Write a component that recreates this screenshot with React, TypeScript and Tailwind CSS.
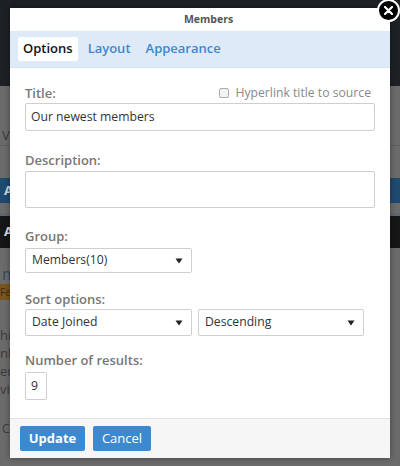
function Caret() {
  return (
    <svg width="8" height="6" viewBox="0 0 8 6" className="shrink-0">
      <path d="M0.5 0.5 L7.5 0.5 L4 5.5 Z" fill="#222" />
    </svg>
  );
}

function Select({ value, className }: { value: string; className: string }) {
  return (
    <div
      className={`flex items-center justify-between rounded-[2px] border border-[#cfcfcf] bg-white pl-[6px] pr-[8px] text-[12.2px] text-[#333] ${className}`}
    >
      <span>{value}</span>
      <Caret />
    </div>
  );
}

function Label({ text, className }: { text: string; className: string }) {
  return (
    <div className={`text-[13px] font-semibold leading-[16px] text-[#777] ${className}`}>{text}</div>
  );
}

function Backdrop() {
  return (
    <div className="flex h-[466px] w-[400px] flex-col bg-[#6b6b6b] text-[13px] text-[#3a3a3a]">
      <div className="h-[86px] bg-[#1d2125]" />
      <div className="flex h-[60px] items-center border-b border-[#5f5f5f] pl-[2px] pt-[40px]">Vi</div>
      <div className="h-[32px]" />
      <div className="flex h-[25px] items-center bg-[#1f4a70] pl-[4px] font-bold text-[#cfd6de]">A</div>
      <div className="h-[13px] border-b-[3px] border-[#5c6670]" />
      <div className="flex h-[32px] items-center bg-[#161616] pl-[4px] font-bold text-[#ddd]">A</div>
      <div className="h-[16px]" />
      <div className="h-[20px] pl-[2px] text-[16px] leading-[20px] text-[#2d4a66]">m</div>
      <div className="h-[16px] w-[20px] bg-[#7a5520] text-[10px] leading-[16px] text-[#3a2a10]">Fe</div>
      <div className="h-[26px]" />
      <div className="flex flex-col leading-[18px]">
        <span>hi</span>
        <span>nl</span>
        <span>er</span>
        <span>vis</span>
      </div>
      <div className="h-[22px]" />
      <div className="pl-[2px] text-[12px]">Co</div>
    </div>
  );
}

export default function App() {
  const font = { fontFamily: '"Open Sans", "Noto Sans", sans-serif' };
  return (
    <div className="relative h-[466px] w-[400px] overflow-hidden" style={font}>
      <Backdrop />

      {/* Modal */}
      <div className="absolute left-[10px] top-[8px] flex h-[450px] w-[380px] flex-col bg-white shadow-[0_0_6px_rgba(0,0,0,0.4)]">
        <div className="flex h-[23px] shrink-0 items-center justify-center pl-[17px] text-[10.5px] font-bold text-[#555] shadow-[0_1px_2px_rgba(0,0,0,0.35)]">
          Members
        </div>
        <div className="flex h-[37px] shrink-0 items-center gap-[5px] border-b border-[#d6e2f0] bg-[#dfeaf8] px-[8px]">
          <div className="flex h-[24px] items-center rounded-[2px] bg-white px-[5px] text-[13px] font-semibold text-[#111]">
            Options
          </div>
          <div className="px-[5px] text-[13px] font-semibold text-[#3f86cf]">Layout</div>
          <div className="px-[5px] text-[13px] font-semibold text-[#3f86cf]">Appearance</div>
        </div>

        <div className="flex flex-1 flex-col px-[15px] pt-[17px]">
          <div className="flex items-center justify-between">
            <Label text="Title:" className="" />
            <label className="flex items-center gap-[6px] pr-[4px] text-[12.2px] leading-[16px] text-[#8a8a8a]">
              <span className="h-[10px] w-[10px] rounded-[2px] border border-[#aaa] bg-[#f3f3f3]" />
              Hyperlink title to source
            </label>
          </div>
          <div className="mt-[2px] flex h-[28px] items-center rounded-[2px] border border-[#cfcfcf] px-[5px] text-[12.2px] text-[#333]">
            Our newest members
          </div>

          <Label text="Description:" className="mt-[21px]" />
          <div className="mt-[3px] h-[37px] rounded-[2px] border border-[#cfcfcf]" />

          <Label text="Group:" className="mt-[20px]" />
          <Select value="Members(10)" className="mt-[4px] h-[25px] w-[167px]" />

          <Label text="Sort options:" className="mt-[18px]" />
          <div className="mt-[2px] flex gap-[6px]">
            <Select value="Date Joined" className="h-[27px] w-[167px]" />
            <Select value="Descending" className="h-[27px] w-[166px]" />
          </div>

          <Label text="Number of results:" className="mt-[16px]" />
          <div className="mt-[4px] flex h-[28px] w-[22px] items-center rounded-[2px] border border-[#cfcfcf] pl-[5px] text-[12.2px] text-[#333]">
            9
          </div>
        </div>

        <div className="flex h-[40px] shrink-0 items-center gap-[8px] border-t border-[#e2e2e2] bg-[#f6f6f6] px-[10px]">
          <button className="flex h-[25px] w-[65px] items-center justify-center rounded-[2px] bg-[#3d89d0] text-[13px] font-bold text-white">
            Update
          </button>
          <button className="flex h-[25px] w-[58px] items-center justify-center rounded-[2px] bg-[#3d89d0] text-[13px] text-white">
            Cancel
          </button>
        </div>
      </div>

      {/* Close button */}
      <div className="absolute left-[377px] top-[-1px] flex h-[23px] w-[23px] items-center justify-center rounded-full border-2 border-white bg-black">
        <svg width="9" height="9" viewBox="0 0 9 9">
          <path d="M1 1 L8 8 M8 1 L1 8" stroke="white" strokeWidth="2.2" strokeLinecap="round" />
        </svg>
      </div>
    </div>
  );
}
